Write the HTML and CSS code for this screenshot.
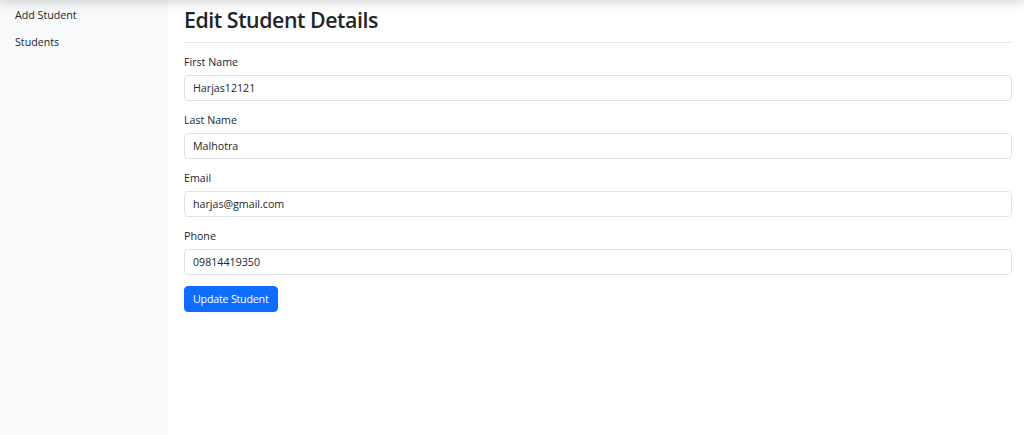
FILE: index.html
```html
<!DOCTYPE html>
<html lang="en">
<head>
<meta charset="utf-8">
<title>Edit Student Details</title>
<link rel="stylesheet" href="styles.css">
</head>
<body>
<div class="topbar-shadow"></div>
<div class="layout">
  <aside class="sidebar">
    <a class="side-link" href="#">Add Student</a>
    <a class="side-link" href="#">Students</a>
  </aside>
  <main class="main">
    <h2 class="title">Edit Student Details</h2>
    <hr class="divider">
    <form class="form">
      <div class="group">
        <label class="label">First Name</label>
        <input class="input" type="text" value="Harjas12121">
      </div>
      <div class="group">
        <label class="label">Last Name</label>
        <input class="input" type="text" value="Malhotra">
      </div>
      <div class="group">
        <label class="label">Email</label>
        <input class="input" type="text" value="harjas@gmail.com">
      </div>
      <div class="group">
        <label class="label">Phone</label>
        <input class="input" type="text" value="09814419350">
      </div>
      <button class="btn" type="button">Update Student</button>
    </form>
  </main>
</div>
</body>
</html>
```
FILE: styles.css
```css
* { box-sizing: border-box; }
html, body { margin: 0; padding: 0; height: 100%; }
body {
  font-family: "Open Sans", "Noto Sans", sans-serif;
  font-size: 10.67px;
  line-height: 1.5;
  color: #212529;
  background: #fff;
}
.topbar-shadow {
  position: fixed;
  left: 0; right: 0; top: -40px;
  height: 40px;
  background: #fff;
  box-shadow: 0 2px 12px rgba(0,0,0,0.18);
  z-index: 10;
}
.layout {
  display: flex;
  min-height: 100%;
}
.sidebar {
  width: 168px;
  flex: 0 0 168px;
  background: #f8f9fa;
  display: flex;
  flex-direction: column;
  padding: 7px 0 0 15px;
  gap: 11px;
}
.side-link {
  color: #212529;
  text-decoration: none;
  font-size: 10.67px;
  line-height: 16px;
}
.main {
  flex: 1;
  padding: 7px 12px 0 16px;
}
.title {
  margin: 0;
  font-size: 21.33px;
  font-weight: 600;
  line-height: 25.6px;
  letter-spacing: -0.45px;
}
.divider {
  margin: 9px 0 11px;
  border: 0;
  border-top: 1px solid #e5e7e9;
}
.group {
  margin-bottom: 11px;
}
.label {
  display: block;
  margin-bottom: 5px;
  line-height: 16px;
}
.input {
  display: block;
  width: 100%;
  height: 26px;
  padding: 4px 8px;
  font-family: inherit;
  font-size: 10.67px;
  line-height: 16px;
  color: #212529;
  background: #fff;
  border: 1px solid #dee2e6;
  border-radius: 4px;
}
.btn {
  display: inline-block;
  height: 26px;
  padding: 4px 8px;
  font-family: inherit;
  font-size: 10.67px;
  line-height: 16px;
  letter-spacing: -0.2px;
  color: #fff;
  background: #0d6efd;
  border: 1px solid #0d6efd;
  border-radius: 4px;
}
```
